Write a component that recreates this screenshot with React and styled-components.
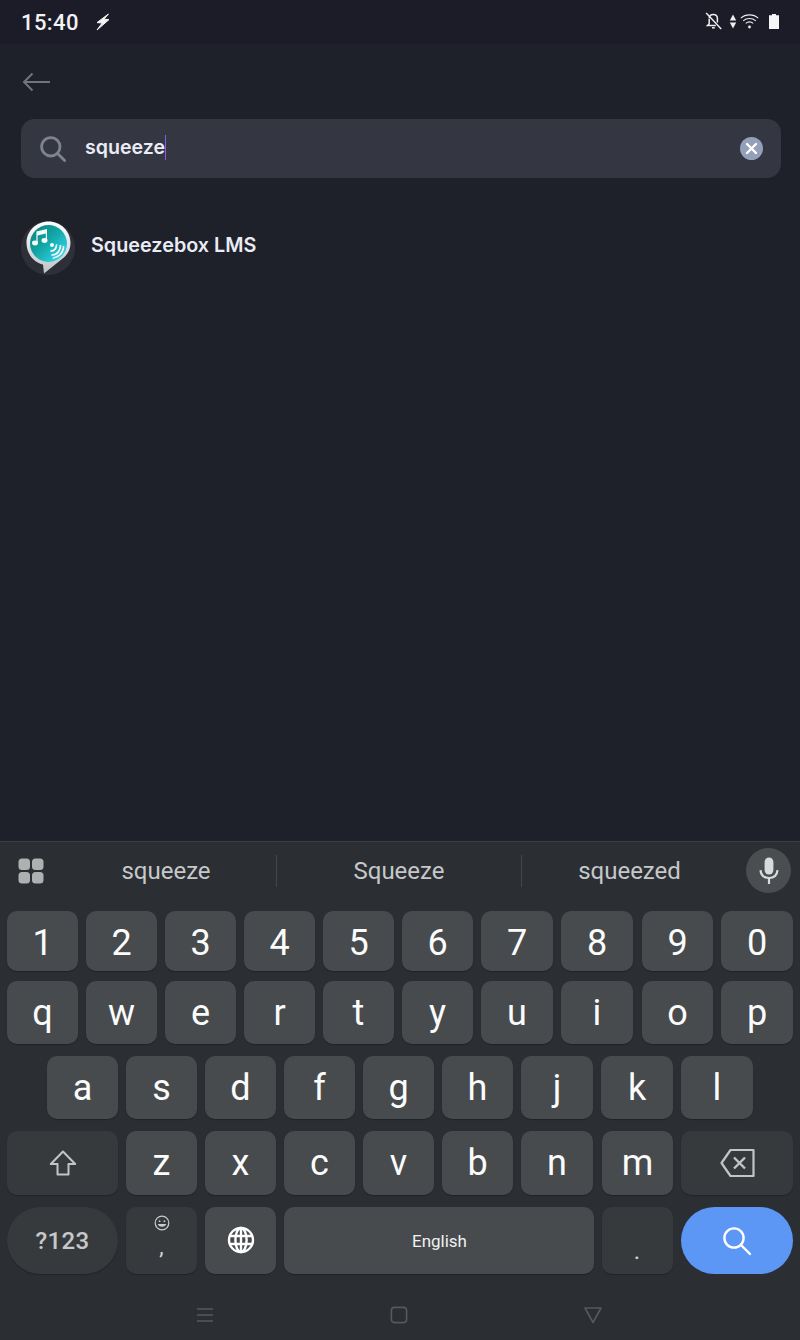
import React from 'react'
import styled, { createGlobalStyle } from 'styled-components'

const GlobalStyle = createGlobalStyle`
  html, body { margin: 0; padding: 0; background: #1e2129; }
  * { box-sizing: border-box; }
`

const Screen = styled.div`
  width: 800px;
  height: 1340px;
  display: flex;
  flex-direction: column;
  overflow: hidden;
  background: #1e2129;
  font-family: Roboto, sans-serif;
`

const StatusBar = styled.div`
  height: 44px;
  flex: none;
  display: flex;
  align-items: center;
  padding: 0 21px 0 21px;
  background: #1b1c27;
  color: #f2f3f5;
`

const Clock = styled.span`
  font-size: 22px;
  font-weight: 500;
  letter-spacing: 0.4px;
  margin-right: 17px;
`

const StatusIcons = styled.div`
  margin-left: auto;
  display: flex;
  align-items: center;
`

const StatusSlot = styled.span`
  display: flex;
  margin-left: ${p => p.$ml || 0}px;
  margin-top: -2px;
`

const Main = styled.div`
  flex: 1;
  padding: 0 19px 0 21px;
`

const BackRow = styled.div`
  height: 75px;
  display: flex;
  align-items: center;
  padding-top: 1px;
`

const SearchBox = styled.div`
  height: 59px;
  display: flex;
  align-items: center;
  padding: 0 18px 0 19px;
  border-radius: 14px;
  background: #343741;
`

const Typed = styled.span`
  margin-left: 19px;
  margin-top: -3px;
  height: 25px;
  line-height: 24px;
  font-family: Inter, sans-serif;
  font-size: 19.6px;
  font-weight: 600;
  color: #e9ebf6;
  border-right: 1px solid #7c5cff;
`

const ClearButton = styled.span`
  margin-left: auto;
  width: 23px;
  height: 23px;
  border-radius: 50%;
  background: #94a0ba;
  display: flex;
  align-items: center;
  justify-content: center;
`

const ResultRow = styled.div`
  margin-top: 43px;
  display: flex;
  align-items: center;
  gap: 16px;
`

const ResultName = styled.span`
  font-family: Inter, sans-serif;
  font-size: 19.8px;
  font-weight: 600;
  color: #e9ebf6;
  margin-top: -7px;
`

const Keyboard = styled.div`
  flex: none;
  height: 499px;
  background: #2b2f33;
  border-top: 1px solid #3c4044;
  display: flex;
  flex-direction: column;
`

const Suggestions = styled.div`
  height: 69px;
  flex: none;
  display: flex;
  align-items: center;
  padding: 0 9px 12px 18px;
`

const SuggestionList = styled.div`
  display: flex;
  align-items: center;
  margin-left: 12px;
`

const Suggestion = styled.div`
  width: ${p => p.$w}px;
  height: 32px;
  display: flex;
  align-items: center;
  justify-content: center;
  font-size: 24px;
  color: #c6c8ca;
  border-left: ${p => (p.$divided ? '1px solid #43474b' : 'none')};
`

const MicButton = styled.div`
  margin-left: auto;
  width: 45px;
  height: 45px;
  border-radius: 50%;
  background: #4a4e51;
  display: flex;
  align-items: center;
  justify-content: center;
`

const Rows = styled.div`
  display: flex;
  flex-direction: column;
  padding: 0 7px;
`

const KeyRow = styled.div`
  display: flex;
  gap: 8px;
  height: ${p => p.$h}px;
  margin-bottom: ${p => p.$mb}px;
  padding-left: ${p => p.$indent || 0}px;
`

const Key = styled.div`
  width: ${p => p.$w || 71}px;
  flex: none;
  display: flex;
  flex-direction: column;
  align-items: center;
  justify-content: center;
  margin-left: ${p => p.$ml || 0}px;
  padding-top: ${p => p.$pt || 0}px;
  border-radius: ${p => (p.$pill ? '34px' : '10px')};
  background: ${p => (p.$accent ? '#5c97f6' : p.$mod ? '#373a3d' : '#474b4e')};
  box-shadow: ${p => (p.$accent ? 'none' : '0 1px 1px rgba(0, 0, 0, 0.25)')};
  color: #fbfbfb;
  font-size: 36px;
  line-height: 1;
`

const SpaceLabel = styled.span`
  font-size: 17px;
  margin-top: 2px;
  margin-left: 1px;
  color: #f1f1f1;
`

const ModLabel = styled.span`
  font-size: 24px;
  font-weight: 500;
  letter-spacing: 0.4px;
  color: #c6c8ca;
`

const SmileSlot = styled.span`
  display: flex;
  margin-top: -9px;
`

const Comma = styled.span`
  font-size: 22px;
  line-height: 20px;
  height: 20px;
  margin-top: 6px;
  color: #d5d6d8;
`

const Dot = styled.span`
  font-size: 24px;
  line-height: 24px;
  margin-top: 20px;
  margin-left: -1px;
  color: #d5d6d8;
`

const NavBar = styled.div`
  flex: 1;
  display: grid;
  grid-template-columns: 195px 20px 1fr 20px 197px;
  justify-items: center;
  align-items: center;
  padding-top: 15px;
`

const GlobeSlot = styled.span`
  display: flex;
  margin-top: -2px;
`

const BoltIcon = () => (
  <svg width="14" height="18" viewBox="0 0 14 18" fill="#f2f3f5" stroke="#f2f3f5" strokeWidth="1" strokeLinejoin="round">
    <path d="M12.4 1 1 9.6 6.2 10 1 17 13 6.6 8 6.2z" />
  </svg>
)

const BellOffIcon = () => (
  <svg width="17" height="18" viewBox="0 0 17 18" fill="none" stroke="#eceef0" strokeWidth="1.5">
    <path d="M4.2 6.5C4.2 4 6 2.4 8.3 2.4S12.4 4 12.4 6.5V10.5M10.8 13.6H2.5L4.2 11.8V7" />
    <path d="M7 15.8h2.8" />
    <path d="M1.2 1 16.2 17" />
  </svg>
)

const ArrowsIcon = () => (
  <svg width="8" height="15" viewBox="0 0 8 15" fill="#eceef0">
    <path d="M4 .5 7.2 6.5H.8zM4 14.5.8 8.5H7.2z" />
  </svg>
)

const WifiIcon = () => (
  <svg width="19" height="16" viewBox="0 0 19 16" fill="none" stroke="#eceef0" strokeWidth="1.1">
    <path d="M.8 5.2C5.6.8 13.4.8 18.2 5.2" />
    <path d="M3.2 7.8C6.7 4.8 12.3 4.8 15.8 7.8" />
    <path d="M5.7 10.4C7.9 8.7 11.1 8.7 13.3 10.4" />
    <circle cx="9.5" cy="14" r="1.4" fill="#eceef0" stroke="none" />
  </svg>
)

const BatteryIcon = () => (
  <svg width="10" height="15" viewBox="0 0 10 15" fill="#f4f5f6">
    <path d="M3 0h4v1.2h3V15H0V1.2h3z" />
  </svg>
)

const BackIcon = () => (
  <svg width="30" height="22" viewBox="0 0 30 22" fill="none" stroke="#6f7480" strokeWidth="2">
    <path d="M29 11H3M11.5 2.5 3 11l8.5 8.5" />
  </svg>
)

const SearchIcon = () => (
  <svg width="26" height="26" viewBox="0 0 26 26" fill="none" stroke="#7e838d" strokeWidth="2.8">
    <circle cx="10.8" cy="10.8" r="9.2" />
    <path d="M17.5 17.5 24.6 24.6" strokeLinecap="round" />
  </svg>
)

const ClearIcon = () => (
  <svg width="13" height="13" viewBox="0 0 13 13" stroke="#fff" strokeWidth="2.4" strokeLinecap="round">
    <path d="M2 2l9 9M11 2l-9 9" />
  </svg>
)

const AppLogo = () => (
  <svg width="54" height="54" viewBox="0 0 54 54">
    <defs>
      <linearGradient id="logoFill" x1="0" y1="0" x2="1" y2="1">
        <stop offset="0" stopColor="#0b8076" />
        <stop offset="0.45" stopColor="#12a5a5" />
        <stop offset="1" stopColor="#38e2ff" />
      </linearGradient>
      <linearGradient id="logoRim" x1="0" y1="0" x2="0" y2="1">
        <stop offset="0" stopColor="#ffffff" />
        <stop offset="1" stopColor="#bfc3c6" />
      </linearGradient>
    </defs>
    <circle cx="27" cy="27" r="27" fill="#2e3039" />
    <path d="M27.5 0.5C39.6 0.5 49.5 10 49.5 22C49.5 29 46 34.5 41 38L23 52.5L22 43.5C12.5 41.5 5.5 32.5 5.5 22C5.5 10 15.4 0.5 27.5 0.5Z" fill="url(#logoRim)" />
    <circle cx="27.5" cy="22.5" r="18.5" fill="url(#logoFill)" />
    <g fill="#f4fbfb">
      <ellipse cx="14" cy="22" rx="3" ry="2.4" />
      <ellipse cx="23.5" cy="19.5" rx="3" ry="2.4" />
      <path d="M15.4 22V10.5L26 8V19.5H24.8V12.5L16.6 14.4V22Z" />
      <circle cx="31" cy="24" r="2" />
    </g>
    <g fill="none" stroke="#f4fbfb" strokeWidth="1.7" strokeLinecap="round">
      <path d="M30 30C33 30 35.5 27.5 35.5 24" />
      <path d="M31 34C36 34 39.5 29.5 39.5 24.5" />
      <path d="M32.5 37C38 36 42.5 31.5 42.5 25.5" />
    </g>
  </svg>
)

const GridIcon = () => (
  <svg width="26" height="26" viewBox="0 0 26 26" fill="#aeb0b2">
    <rect x="0.5" y="0.5" width="11.5" height="11.5" rx="3.5" />
    <rect x="14" y="0.5" width="11.5" height="11.5" rx="3.5" />
    <rect x="0.5" y="14" width="11.5" height="11.5" rx="3.5" />
    <rect x="14" y="14" width="11.5" height="11.5" rx="3.5" />
  </svg>
)

const MicIcon = () => (
  <svg width="20" height="28" viewBox="0 0 20 28" fill="none">
    <rect x="5.6" y="0.5" width="8.8" height="17" rx="4.4" fill="#d9dadb" />
    <path d="M1.5 13.2C2 18.5 5.5 21 10 21S18 18.5 18.5 13.2" stroke="#d9dadb" strokeWidth="2.2" />
    <path d="M10 21v6" stroke="#d9dadb" strokeWidth="2.2" />
  </svg>
)

const ShiftIcon = () => (
  <svg width="28" height="26" viewBox="0 0 28 26" fill="none" stroke="#c2c4c6" strokeWidth="2" strokeLinejoin="round">
    <path d="M14 1.5 1.8 14H8.5V24.5H19.5V14H26.2Z" />
  </svg>
)

const BackspaceIcon = () => (
  <svg width="35" height="30" viewBox="0 0 35 30" fill="none" stroke="#c2c4c6" strokeWidth="2.2">
    <path d="M10.5 2H33.5V28H10.5L1.5 15Z" strokeLinejoin="round" />
    <path d="M14 9.5l11 11M25 9.5l-11 11" strokeWidth="2.4" />
  </svg>
)

const SmileIcon = () => (
  <svg width="16" height="16" viewBox="0 0 16 16" fill="none" stroke="#c9cbcd" strokeWidth="1.2">
    <circle cx="8" cy="8" r="6.8" />
    <circle cx="5.6" cy="6.2" r="0.9" fill="#c9cbcd" stroke="none" />
    <circle cx="10.4" cy="6.2" r="0.9" fill="#c9cbcd" stroke="none" />
    <path d="M4.6 9.6C5.6 11.8 10.4 11.8 11.4 9.6Z" fill="#c9cbcd" />
  </svg>
)

const GlobeIcon = () => (
  <svg width="28" height="28" viewBox="0 0 28 28" fill="none" stroke="#fff" strokeWidth="2.4">
    <circle cx="14" cy="14" r="12" />
    <ellipse cx="14" cy="14" rx="5.6" ry="12" />
    <path d="M2.6 10H25.4M2.6 18H25.4M14 2V26" />
  </svg>
)

const WhiteSearchIcon = () => (
  <svg width="30" height="30" viewBox="0 0 30 30" fill="none" stroke="#fff" strokeWidth="2.4">
    <circle cx="12" cy="12" r="9.6" />
    <path d="M19 19 28 28" strokeLinecap="round" />
  </svg>
)

const MenuNavIcon = () => (
  <svg width="18" height="16" viewBox="0 0 18 16" stroke="#55595d" strokeWidth="1.6">
    <path d="M1 2h16M1 8h16M1 14h16" />
  </svg>
)

const HomeNavIcon = () => (
  <svg width="18" height="18" viewBox="0 0 18 18" fill="none" stroke="#55595d" strokeWidth="1.6">
    <rect x="1.4" y="1.4" width="15.2" height="15.2" rx="3" />
  </svg>
)

const BackNavIcon = () => (
  <svg width="20" height="18" viewBox="0 0 20 18" fill="none" stroke="#55595d" strokeWidth="1.6" strokeLinejoin="round">
    <path d="M2 2H18L10 16.5Z" />
  </svg>
)

// the keys in the reference are not an even grid: a couple run 1px wider
const NUMBERS = '1234567890'.split('')
const TOP = 'qwertyuiop'.split('')
const MIDDLE = 'asdfghjkl'.split('')
const BOTTOM = 'zxcvbnm'.split('')

const wideRowProps = i => ({
  $w: i === 6 || i === 7 || i === 9 ? 72 : 71,
  $ml: i === 8 ? 1 : 0,
})

const midRowProps = i => ({ $w: i === 6 || i >= 7 ? 72 : 71 })

const bottomRowProps = i => ({
  $w: i === 5 ? 72 : 71,
  $ml: i === 6 ? 1 : 0,
})

export default function App() {
  return (
    <Screen>
      <GlobalStyle />
      <StatusBar>
        <Clock>15:40</Clock>
        <BoltIcon />
        <StatusIcons>
          <StatusSlot><BellOffIcon /></StatusSlot>
          <StatusSlot $ml={7}><ArrowsIcon /></StatusSlot>
          <StatusSlot $ml={3}><WifiIcon /></StatusSlot>
          <StatusSlot $ml={10}><BatteryIcon /></StatusSlot>
        </StatusIcons>
      </StatusBar>

      <Main>
        <BackRow>
          <BackIcon />
        </BackRow>
        <SearchBox>
          <SearchIcon />
          <Typed>squeeze</Typed>
          <ClearButton>
            <ClearIcon />
          </ClearButton>
        </SearchBox>
        <ResultRow>
          <AppLogo />
          <ResultName>Squeezebox LMS</ResultName>
        </ResultRow>
      </Main>

      <Keyboard>
        <Suggestions>
          <GridIcon />
          <SuggestionList>
            <Suggestion $w={220}>squeeze</Suggestion>
            <Suggestion $w={245} $divided>Squeeze</Suggestion>
            <Suggestion $w={216} $divided>squeezed</Suggestion>
          </SuggestionList>
          <MicButton>
            <MicIcon />
          </MicButton>
        </Suggestions>
        <Rows>
          <KeyRow $h={60} $mb={10}>
            {NUMBERS.map((k, i) => <Key key={k} $pt={3} {...wideRowProps(i)}>{k}</Key>)}
          </KeyRow>
          <KeyRow $h={63} $mb={12}>
            {TOP.map((k, i) => <Key key={k} {...wideRowProps(i)}>{k}</Key>)}
          </KeyRow>
          <KeyRow $h={63} $mb={12} $indent={40}>
            {MIDDLE.map((k, i) => <Key key={k} {...midRowProps(i)}>{k}</Key>)}
          </KeyRow>
          <KeyRow $h={64} $mb={12}>
            <Key $w={111} $mod><ShiftIcon /></Key>
            {BOTTOM.map((k, i) => <Key key={k} {...bottomRowProps(i)}>{k}</Key>)}
            <Key $w={112} $mod><BackspaceIcon /></Key>
          </KeyRow>
          <KeyRow $h={67} $mb={0}>
            <Key $w={111} $mod $pill><ModLabel>?123</ModLabel></Key>
            <Key $mod>
              <SmileSlot><SmileIcon /></SmileSlot>
              <Comma>,</Comma>
            </Key>
            <Key><GlobeSlot><GlobeIcon /></GlobeSlot></Key>
            <Key $w={310}><SpaceLabel>English</SpaceLabel></Key>
            <Key $mod><Dot>.</Dot></Key>
            <Key $w={112} $accent $pill><WhiteSearchIcon /></Key>
          </KeyRow>
        </Rows>
        <NavBar>
          <span />
          <MenuNavIcon />
          <HomeNavIcon />
          <BackNavIcon />
          <span />
        </NavBar>
      </Keyboard>
    </Screen>
  )
}
